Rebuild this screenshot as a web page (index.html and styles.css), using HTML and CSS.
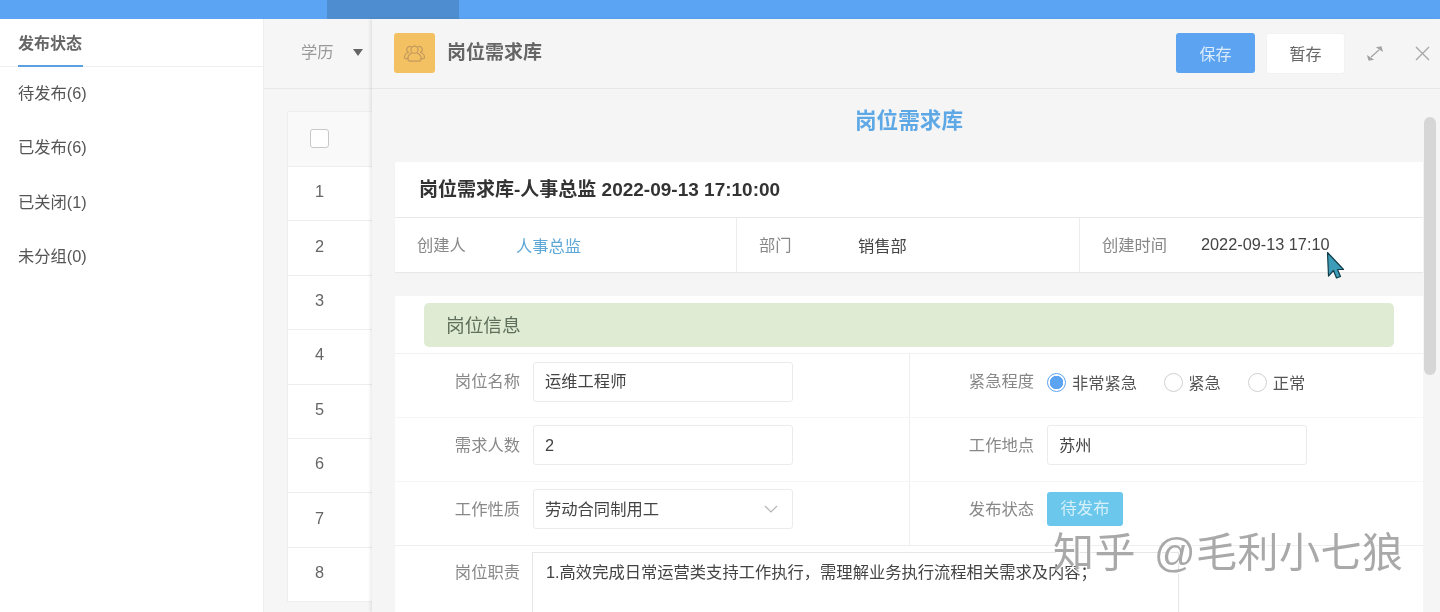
FILE: index.html
```html
<!DOCTYPE html>
<html lang="zh-CN">
<head>
<meta charset="utf-8">
<title>岗位需求库</title>
<link rel="stylesheet" href="styles.css">
</head>
<body>
<div class="page">
  <div class="topbar"><div class="topbar-active"></div></div>
  <div class="main">
    <aside class="sidebar">
      <div class="side-tabs"><span class="side-tab">发布状态</span></div>
      <ul class="side-list">
        <li>待发布(6)</li>
        <li>已发布(6)</li>
        <li>已关闭(1)</li>
        <li>未分组(0)</li>
      </ul>
    </aside>
    <section class="content">
      <div class="filter"><span>学历</span><i class="caret"></i></div>
      <div class="table">
        <div class="trow thead"><i class="checkbox"></i></div>
        <div class="trow">1</div>
        <div class="trow">2</div>
        <div class="trow">3</div>
        <div class="trow">4</div>
        <div class="trow">5</div>
        <div class="trow">6</div>
        <div class="trow">7</div>
        <div class="trow">8</div>
      </div>
    </section>
  </div>

  <div class="drawer">
    <header class="drawer-head">
      <div class="app-icon">
        <svg width="23" height="17" viewBox="0 0 26 20" fill="none" stroke="#c49a5e" stroke-width="1.400" stroke-linejoin="round" stroke-linecap="round">
          <circle cx="13" cy="5.500" r="4.200"/>
          <path d="M9 2a3.500 3.500 0 0 0-3 6.500C3 9.500 1.300 11.800 1.200 14.500c0 1 .7 1.500 1.700 1.500h2.600"/>
          <path d="M17 2a3.500 3.500 0 0 1 3 6.500c3 1 4.700 3.300 4.800 6 0 1-.7 1.500-1.700 1.500h-2.600"/>
          <path d="M9.800 9.500c-3 1-4.600 3.600-4.600 6.500 0 1.800 1 3 2.400 3h10.800c1.400 0 2.400-1.200 2.400-3 0-2.900-1.600-5.500-4.600-6.500"/>
        </svg>
      </div>
      <h2 class="drawer-title">岗位需求库</h2>
      <div class="drawer-actions">
        <button class="btn btn-primary">保存</button>
        <button class="btn btn-plain">暂存</button>
        <svg class="tool tool-expand" width="16" height="15" viewBox="0 0 16 15" fill="none" stroke="#a2a2a2" stroke-width="1.200">
          <path d="M4 11 12 4"/>
          <path d="M1 10.500l1 3.500 3.500-.5z" fill="#a2a2a2"/>
          <path d="M15 4.500 14 1l-3.500.5z" fill="#a2a2a2"/>
        </svg>
        <svg class="tool tool-close" width="15" height="15" viewBox="0 0 15 15" fill="none" stroke="#a8a8a8" stroke-width="1.400">
          <path d="M1 1l13 13M14 1 1 14"/>
        </svg>
      </div>
    </header>

    <div class="drawer-body">
      <h1 class="doc-title">岗位需求库</h1>

      <div class="card summary">
        <div class="summary-title">岗位需求库-人事总监 2022-09-13 17:10:00</div>
        <div class="summary-row">
          <div class="summary-cell"><span class="s-label">创建人</span><span class="s-value link">人事总监</span></div>
          <div class="summary-cell"><span class="s-label">部门</span><span class="s-value">销售部</span></div>
          <div class="summary-cell"><span class="s-label">创建时间</span><span class="s-value">2022-09-13 17:10</span></div>
        </div>
      </div>

      <div class="card form-card">
        <div class="section-bar">岗位信息</div>
        <div class="form-grid">
          <div class="form-row">
            <div class="field"><label>岗位名称</label><div class="input">运维工程师</div></div>
            <div class="field"><label>紧急程度</label>
              <div class="radios">
                <span class="radio on"><i></i>非常紧急</span>
                <span class="radio r2"><i></i>紧急</span>
                <span class="radio r3"><i></i>正常</span>
              </div>
            </div>
          </div>
          <div class="form-row">
            <div class="field"><label>需求人数</label><div class="input">2</div></div>
            <div class="field"><label>工作地点</label><div class="input">苏州</div></div>
          </div>
          <div class="form-row">
            <div class="field"><label>工作性质</label>
              <div class="input select">劳动合同制用工
                <svg width="14" height="8" viewBox="0 0 14 8" fill="none" stroke="#b5b5b5" stroke-width="1.200"><path d="M1 1l6 6 6-6"/></svg>
              </div>
            </div>
            <div class="field"><label>发布状态</label><span class="tag">待发布</span></div>
          </div>
        </div>
        <div class="text-row">
          <label>岗位职责</label>
          <div class="textarea">1.高效完成日常运营类支持工作执行，需理解业务执行流程相关需求及内容；</div>
        </div>
      </div>
    </div>
    <div class="scrollbar"></div>
  </div>

  <svg class="cursor" width="19" height="28" viewBox="0 0 19 28">
    <path d="M1.500 1.500 17.500 18.500H11.500L14.500 25.500 10.500 27 7.500 19.500 2.500 25z" fill="#3d9db8" stroke="#123c4a" stroke-width="1.200" stroke-linejoin="round"/>
  </svg>
  <div class="watermark">知乎 @毛利小七狼</div>
</div>
</body>
</html>
```
FILE: styles.css
```css
* { box-sizing: border-box; }
html, body { margin: 0; padding: 0; height: 100%; overflow: hidden; background: #f5f5f5; }
body { font-family: "Liberation Sans", "Noto Sans CJK SC", sans-serif; font-size: 16.300px; color: #666; }
h1, h2, ul { margin: 0; padding: 0; }
i { display: block; }

.page { position: relative; width: 1440px; height: 612px; overflow: hidden; filter: blur(.4px); }

.topbar { height: 19px; background: #5ba4f3; padding-left: 327px; }
.topbar-active { width: 132px; height: 19px; background: #4e8dd0; }

.main { display: flex; height: 593px; }

.sidebar { width: 264px; background: #fff; border-right: 1px solid #eee; flex: none; }
.side-tabs { height: 48px; padding-left: 18px; border-bottom: 1px solid #eee; }
.side-tab { display: block; width: 65px; height: 48px; line-height: 49px; font-size: 16px; font-weight: 700; color: #666; border-bottom: 2px solid #5a9fe0; }
.side-list { list-style: none; }
.side-list li { height: 54.300px; line-height: 52px; padding-left: 18px; color: #555; }

.content { flex: 1; background: #f6f6f6; }
.filter { height: 70px; border-bottom: 1px solid #e8e8e8; display: flex; align-items: center; padding: 0 0 5px 37px; color: #999; }
.caret { margin: 3px 0 0 19px; width: 0; height: 0; border: 5.500px solid transparent; border-top: 7px solid #666; border-bottom: 0; }

.table { margin: 22px 0 0 23px; background: #fff; border: 1px solid #eee; border-width: 1px 0 0 1px; }
.trow { height: 54.400px; display: flex; align-items: center; padding: 0 0 4px 27px; width: 85px; border-bottom: 1px solid #eee; color: #666; }
.thead { background: #f9f9f9; height: 55px; padding: 0 0 1px 22px; }
.checkbox { width: 19px; height: 19px; background: #fff; border: 1px solid #c8c8c8; border-radius: 3px; }

.drawer { position: absolute; left: 372px; top: 19px; right: 0; bottom: 0; background: #f5f5f5; box-shadow: -2px 0 3px rgba(0,0,0,.08); }
.drawer-head { height: 70px; display: flex; align-items: flex-start; border-bottom: 1px solid #e6e6e6; padding: 14px 9px 0 22px; }
.app-icon { width: 41px; height: 40px; background: #f4c162; border-radius: 3px; display: flex; align-items: center; justify-content: center; }
.drawer-title { margin-left: 12px; font-size: 19px; line-height: 39px; font-weight: 700; color: #666; }
.drawer-actions { margin-left: auto; display: flex; align-items: center; height: 40px; }
.btn { font-family: inherit; font-size: 16px; border: 0; padding: 0; }
.btn-primary { width: 79px; height: 40px; background: #5ca4f1; color: #dcecfb; border-radius: 3px; }
.btn-plain { width: 77px; height: 39px; margin-left: 12px; background: #fff; color: #666; border-radius: 2px; box-shadow: 0 0 2px rgba(0,0,0,.06); }
.tool-expand { margin-left: 23px; }
.tool-close { margin-left: 32px; margin-right: 1px; }

.drawer-body { padding: 0 17px 0 23px; }
.doc-title { height: 73px; line-height: 64px; text-align: center; font-size: 21.600px; font-weight: 700; color: #5ea8e6; }

.card { background: #fff; }
.summary { height: 110px; box-shadow: 0 1px 1px rgba(0,0,0,.05); }
.summary-title { height: 56px; line-height: 55px; padding-left: 24px; font-size: 19px; font-weight: 700; color: #333; border-bottom: 1px solid #e8e8e8; }
.summary-row { display: grid; grid-template-columns: 341px 343px 344px; height: 54px; }
.summary-cell { display: flex; align-items: center; padding: 0 0 3px 22px; border-left: 1px solid #ececec; }
.summary-cell:first-child { border-left: 0; }
.s-label { width: 99px; color: #888; flex: none; }
.s-value { color: #444; padding-top: 2px; }
.link { color: #5ea8d8; }

.form-card { margin-top: 24px; padding-top: 7px; height: 400px; }
.section-bar { margin: 0 29px; height: 44px; line-height: 45px; padding-left: 22px; font-size: 18.700px; color: #5f6f5c; background: #dfecd3; border-radius: 5px; }
.form-grid { margin-top: 6px; border-top: 1px solid #f1f1f1; }
.form-row { display: grid; grid-template-columns: 514px 1fr; height: 64px; border-bottom: 1px solid #f6f6f6; }
.form-row:last-child { border-bottom: 1px solid #eee; }
.field { display: flex; align-items: flex-start; padding-top: 7px; }
.form-row:first-child .field { padding-top: 8px; }
.field label { width: 125px; line-height: 40px; text-align: right; color: #888; flex: none; }
.form-row:first-child .field label { line-height: 38px; }
.field + .field { border-left: 1px solid #eee; }
.field + .field label { width: 124px; }
.input { position: relative; width: 260px; height: 40px; margin-left: 13px; padding-left: 11px; line-height: 38px; background: #fff; border: 1px solid #ebebeb; border-radius: 3px; color: #444; }
.form-row:first-child .input { line-height: 36px; }
.select { display: flex; align-items: center; justify-content: space-between; padding-right: 14px; }
.radios { display: flex; margin-left: 13px; height: 40px; align-items: center; color: #555; }
.radio { display: flex; align-items: center; }
.radio i { width: 19px; height: 19px; border: 1px solid #d0d0d0; border-radius: 50%; background: #fff; margin-right: 6px; }
.radio.on i { border-color: #5ca4f1; background: radial-gradient(circle, #5ca4f1 0 6.500px, #fff 7px); }
.r2 { margin-left: 27px; }
.r2 i { margin-right: 5px; }
.r3 { margin-left: 27px; }
.tag { margin: 3px 0 0 13px; width: 76px; height: 34px; line-height: 33px; text-align: center; background: #6bc8ec; color: #d6f0fa; border-radius: 3px; }

.text-row { display: flex; align-items: flex-start; padding-top: 6px; }
.text-row label { width: 125px; line-height: 40px; text-align: right; color: #888; flex: none; }
.textarea { width: 647px; height: 100px; margin-left: 12px; padding: 0 13px; line-height: 38px; border: 1px solid #e6e6e6; color: #444; white-space: nowrap; }

.scrollbar { position: absolute; top: 98px; left: 1052px; width: 12px; height: 258px; background: #d6d6d6; border-radius: 6px; }

.cursor { position: absolute; left: 1326px; top: 251px; }
.watermark { position: absolute; left: 1053px; top: 526px; font-size: 41px; line-height: 54px; font-weight: 400; color: #a9a9a9; letter-spacing: .5px; word-spacing: 6px; white-space: nowrap; text-shadow: 1px 1px 0 rgba(255,255,255,.9); }
```
